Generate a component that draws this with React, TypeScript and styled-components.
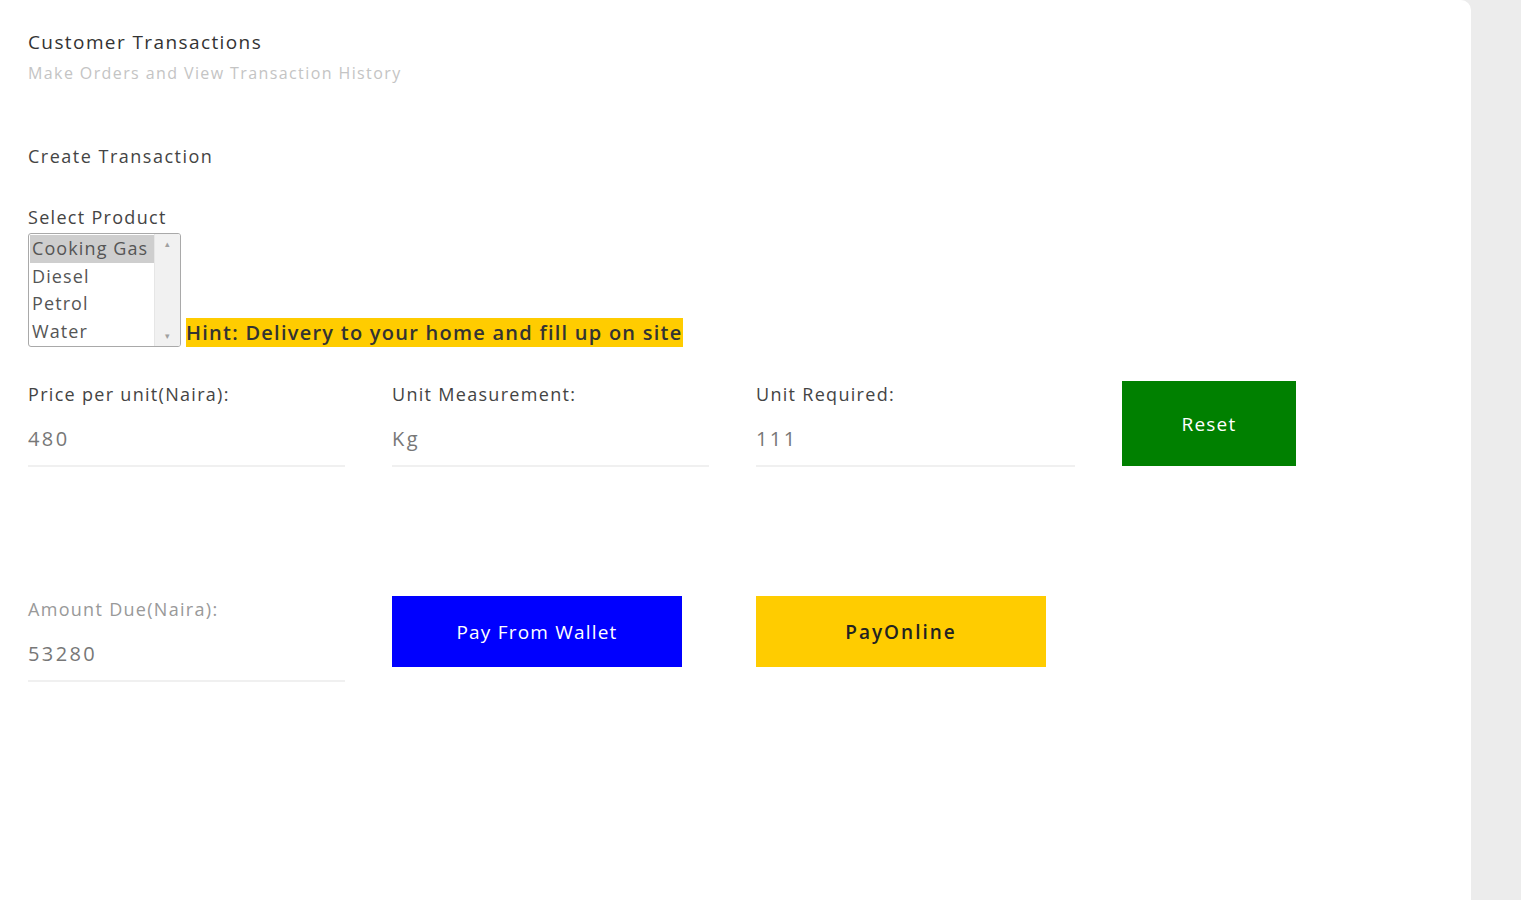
import React, { useState } from 'react';
import styled, { createGlobalStyle } from 'styled-components';

const GlobalStyle = createGlobalStyle`
  html, body { margin: 0; padding: 0; background: #ececec; }
  * { box-sizing: border-box; }
`;

const PRODUCTS = [
  { name: 'Cooking Gas', price: 480, unit: 'Kg' },
  { name: 'Diesel', price: 250, unit: 'Litre' },
  { name: 'Petrol', price: 165, unit: 'Litre' },
  { name: 'Water', price: 50, unit: 'Litre' },
];

const App = () => {
  const [selected, setSelected] = useState(0);
  const [units, setUnits] = useState('111');
  const product = PRODUCTS[selected];
  const amount = product.price * (parseFloat(units) || 0);

  return (
    <Page>
      <GlobalStyle />
      <Card>
        <Title>Customer Transactions</Title>
        <Subtitle>Make Orders and View Transaction History</Subtitle>

        <SectionTitle>Create Transaction</SectionTitle>

        <FieldLabel>Select Product</FieldLabel>
        <ProductRow>
          <ListBox>
            <Options>
              {PRODUCTS.map((p, i) => (
                <Option key={p.name} $active={i === selected} onClick={() => setSelected(i)}>
                  {p.name}
                </Option>
              ))}
            </Options>
            <ScrollTrack>
              <Arrow>▴</Arrow>
              <Arrow>▾</Arrow>
            </ScrollTrack>
          </ListBox>
          <Hint>Hint: Delivery to your home and fill up on site</Hint>
        </ProductRow>

        <FormGrid>
          <Field>
            <FieldLabel>Price per unit(Naira):</FieldLabel>
            <Input value={product.price} readOnly />
          </Field>
          <Field>
            <FieldLabel>Unit Measurement:</FieldLabel>
            <Input value={product.unit} readOnly />
          </Field>
          <Field>
            <FieldLabel>Unit Required:</FieldLabel>
            <Input value={units} onChange={e => setUnits(e.target.value)} />
          </Field>
          <ActionButton $bg="#008000" $color="#fff" $w={174} $h={85} onClick={() => setUnits('')}>
            Reset
          </ActionButton>
        </FormGrid>

        <PayGrid>
          <Field>
            <FieldLabel $muted>Amount Due(Naira):</FieldLabel>
            <Input value={amount} readOnly />
          </Field>
          <ActionButton $bg="#0000ff" $color="#fff" $w={290} $h={71}>Pay From Wallet</ActionButton>
          <ActionButton $bg="#ffcc00" $color="#222" $w={290} $h={71} $bold>PayOnline</ActionButton>
        </PayGrid>
      </Card>
    </Page>
  );
};

export default App;

// --- Styled Components ---

const Page = styled.div`
  min-height: 100vh;
  background: #ececec;
  font-family: 'Open Sans', 'Lato', sans-serif;
`;

const Card = styled.div`
  width: 1471px;
  min-height: 900px;
  background: #fff;
  border-top-right-radius: 10px;
  padding: 30px 0 0 28px;
`;

const Title = styled.div`
  font-size: 19px;
  line-height: 24px;
  color: #333;
  letter-spacing: 1.4px;
`;

const Subtitle = styled.div`
  margin-top: 9px;
  font-size: 16px;
  line-height: 20px;
  color: #c4c4c4;
  letter-spacing: 1.4px;
`;

const SectionTitle = styled.div`
  margin-top: 61px;
  margin-bottom: 38px;
  font-size: 18px;
  line-height: 24px;
  color: #444;
  letter-spacing: 1.5px;
`;

const FieldLabel = styled.div<{ $muted?: boolean }>`
  font-size: 18px;
  line-height: 22px;
  color: ${p => (p.$muted ? '#999' : '#444')};
  letter-spacing: 1.3px;
  white-space: nowrap;
`;

const ProductRow = styled.div`
  display: flex;
  align-items: flex-end;
  gap: 5px;
  margin-top: 5px;
`;

const ListBox = styled.div`
  width: 153px;
  height: 114px;
  display: flex;
  border: 1px solid #a9a9a9;
  border-radius: 3px;
  overflow: hidden;
  background: #fff;
`;

const Options = styled.div`
  flex: 1;
  padding: 1px 0 0 1px;
`;

const Option = styled.div<{ $active: boolean }>`
  height: 27.5px;
  line-height: 27.5px;
  padding-left: 2px;
  font-size: 18px;
  color: #555;
  letter-spacing: 1.1px;
  white-space: nowrap;
  overflow: hidden;
  background: ${p => (p.$active ? '#cecece' : 'transparent')};
  cursor: pointer;
`;

const ScrollTrack = styled.div`
  width: 26px;
  background: #f1f1f1;
  border-left: 1px solid #e6e6e6;
  display: flex;
  flex-direction: column;
  justify-content: space-between;
  align-items: center;
  padding: 4px 0;
`;

const Arrow = styled.span`
  font-size: 9px;
  line-height: 12px;
  color: #a0a0a0;
`;

const Hint = styled.span`
  background: #ffcc00;
  color: #333;
  font-size: 20px;
  font-weight: 600;
  line-height: 29px;
  letter-spacing: 1.25px;
  white-space: nowrap;
`;

const FormGrid = styled.div`
  display: grid;
  grid-template-columns: 317px 317px 319px 174px;
  column-gap: 47px;
  align-items: start;
  margin-top: 34px;
`;

const PayGrid = styled(FormGrid)`
  margin-top: 129px;
`;

const Field = styled.div`
  display: flex;
  flex-direction: column;
  padding-top: 2px;
`;

const Input = styled.input`
  margin-top: 10px;
  height: 52px;
  width: 100%;
  border: none;
  border-bottom: 2px solid #f0f0f0;
  outline: none;
  padding: 0 0 3px;
  background: transparent;
  font-family: inherit;
  font-size: 20px;
  color: #777;
  letter-spacing: 2.4px;
`;

const ActionButton = styled.button<{ $bg: string; $color: string; $w: number; $h: number; $bold?: boolean }>`
  width: ${p => p.$w}px;
  height: ${p => p.$h}px;
  border: none;
  background: ${p => p.$bg};
  color: ${p => p.$color};
  font-family: inherit;
  font-size: 19px;
  font-weight: ${p => (p.$bold ? 600 : 400)};
  letter-spacing: ${p => (p.$bold ? 2 : 1.2)}px;
  cursor: pointer;
`;
